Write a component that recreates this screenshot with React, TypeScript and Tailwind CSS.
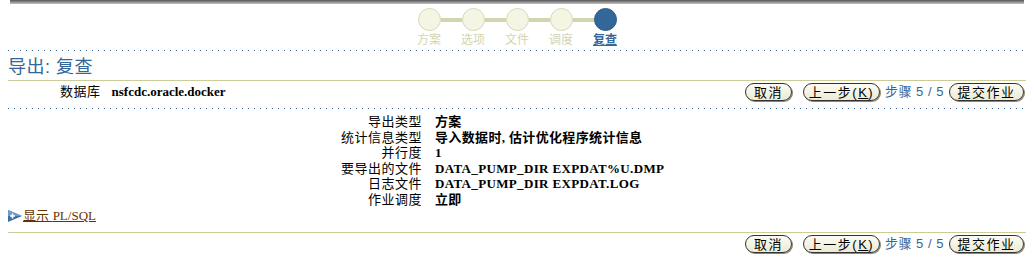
import React from "react";

const cjk = "font-['Liberation_Sans','Noto_Sans_CJK_SC',sans-serif]";
const serif = "font-['Liberation_Serif','Noto_Sans_CJK_SC',serif]";

const steps = ["方案", "选项", "文件", "调度", "复查"];

const rows: [string, string][] = [
    ["导出类型", "方案"],
    ["统计信息类型", "导入数据时, 估计优化程序统计信息"],
    ["并行度", "1"],
    ["要导出的文件", "DATA_PUMP_DIR EXPDAT%U.DMP"],
    ["日志文件", "DATA_PUMP_DIR EXPDAT.LOG"],
    ["作业调度", "立即"],
];

function Dotted() {
    return (
        <div className="mx-[8px] h-px bg-[linear-gradient(to_right,#336699_1px,transparent_1px)] bg-[length:6px_1px] bg-repeat-x" />
    );
}

function Solid() {
    return <div className="mx-[8px] h-px bg-[#cccc99]" />;
}

function Btn({ children, className = "" }: { children: React.ReactNode; className?: string }) {
    return (
        <button
            className={`h-[18px] shrink-0 whitespace-nowrap rounded-[9px] border border-[#333] bg-[linear-gradient(#fbfbf3,#ecebd6)] shadow-[1px_1px_0_#8a8a70] text-[13px] leading-none text-black tracking-[1.5px] ${className}`}
        >
            {children}
        </button>
    );
}

function ButtonBar() {
    return (
        <div className={`flex items-center h-[18px] ${cjk}`}>
            <Btn className="w-[47px]">取消</Btn>
            <Btn className="ml-[11px] w-[77px] tracking-[0.8px]">
                上一步(<span className="underline">K</span>)
            </Btn>
            <span className="ml-[5px] w-[59px] whitespace-nowrap text-[13px] text-[#336699] tracking-[0.5px]">
                步骤 5 / 5
            </span>
            <Btn className="ml-[5px] w-[75px]">提交作业</Btn>
        </div>
    );
}

export default function App() {
    return (
        <div className={`w-[1034px] h-[263px] bg-white ${cjk} text-black overflow-hidden`}>
            {/* top bar */}
            <div className="ml-[10px] mr-[10px] h-[4px] bg-[linear-gradient(#555,#8d8d8d_50%,#c4c4c4)]" />

            {/* train */}
            <div className="h-[46px] flex justify-center pt-[4px]">
                {steps.map((s, i) => {
                    const active = i === steps.length - 1;
                    return (
                        <div key={s} className="w-[44px] flex flex-col items-center">
                            <div className="w-full flex items-center h-[23px]">
                                <div className={`flex-1 h-[4px] ${i === 0 ? "" : "bg-[#d3d5ae]"}`} />
                                <div
                                    className={`w-[23px] h-[23px] rounded-full ${
                                        active
                                            ? "bg-[#336699] border border-[#2d5d8c]"
                                            : "bg-[#f5f5e3] border border-[#d6d8b8]"
                                    }`}
                                />
                                <div className={`flex-1 h-[4px] ${active ? "" : "bg-[#d3d5ae]"}`} />
                            </div>
                            <div
                                className={`mt-[2px] text-[12px] leading-[14px] ${
                                    active ? "font-bold text-[#336699] underline" : "text-[#d3d5ae]"
                                }`}
                            >
                                {s}
                            </div>
                        </div>
                    );
                })}
            </div>

            <Dotted />

            {/* title */}
            <div className="h-[29px] px-[8px] pt-[6px]">
                <h1 className="text-[18px] leading-[20px] text-[#336699] tracking-[0.5px]">导出: 复查</h1>
            </div>

            <Solid />

            <div className="h-[27px] pl-[60px] pr-[10px] flex items-start justify-between pt-[2px]">
                <div className="flex items-center h-[18px] text-[13px]">
                    <span className="tracking-[0.5px]">数据库</span>
                    <span className={`ml-[11px] font-bold ${serif}`}>nsfcdc.oracle.docker</span>
                </div>
                <ButtonBar />
            </div>

            <Dotted />

            {/* details */}
            <div className="pt-[5px] h-[98px]">
                {rows.map(([k, v]) => (
                    <div key={k} className="flex h-[15.5px] items-center text-[13px] leading-[15px]">
                        <div className="w-[422px] text-right tracking-[0.5px]">{k}</div>
                        <div className={`ml-[13px] font-bold tracking-[0.35px] ${serif}`}>{v}</div>
                    </div>
                ))}
            </div>

            {/* show PL/SQL */}
            <div className="h-[25px] px-[8px] pt-[1px]">
                <a href="#" className="flex items-center h-[16px] text-[13px] text-[#663300]">
                    <svg width="14" height="12" viewBox="0 0 14 12" className="mr-[1px]">
                        <polygon points="0,0 14,6 0,12" fill="#3d6fa5" />
                        <polygon points="0,0 14,6 0,6" fill="#6f9ccb" />
                        <path d="M2 6h5M4.5 3.5v5" stroke="#fff" strokeWidth="1.6" />
                    </svg>
                    <span className="underline">
                        显示 <span className={serif}>PL/SQL</span>
                    </span>
                </a>
            </div>

            <Solid />

            <div className="pt-[2px] pr-[10px] flex justify-end">
                <ButtonBar />
            </div>
        </div>
    );
}
